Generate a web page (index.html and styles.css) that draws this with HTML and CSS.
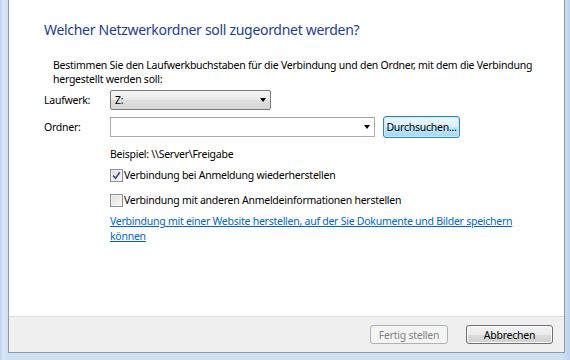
FILE: index.html
```html
<!DOCTYPE html>
<html lang="de">
<head>
<meta charset="utf-8">
<title>Netzlaufwerk verbinden</title>
<link rel="stylesheet" href="styles.css">
</head>
<body>
<div class="frame">
  <div class="window">
    <div class="content">
      <h1 class="title">Welcher Netzwerkordner soll zugeordnet werden?</h1>
      <p class="intro">Bestimmen Sie den Laufwerkbuchstaben für die Verbindung und den Ordner, mit dem die Verbindung hergestellt werden soll:</p>
      <div class="form">
        <div class="row row-drive">
          <span class="label">Laufwerk:</span>
          <div class="dropdown">
            <span class="value">Z:</span>
            <span class="arrow"></span>
          </div>
        </div>
        <div class="row row-folder">
          <span class="label">Ordner:</span>
          <div class="combo">
            <span class="arrow"></span>
          </div>
          <button class="btn btn-focus">Durchsuchen...</button>
        </div>
        <div class="indent">
          <div class="example">Beispiel: \\Server\Freigabe</div>
          <label class="check">
            <span class="box checked">
              <svg width="9" height="9" viewBox="0 0 9 9"><path d="M1.2 4.6 L3.6 7.2 L7.8 1.2" fill="none" stroke="#3a4f7a" stroke-width="1.6"/></svg>
            </span>
            <span>Verbindung bei Anmeldung wiederherstellen</span>
          </label>
          <label class="check">
            <span class="box"></span>
            <span>Verbindung mit anderen Anmeldeinformationen herstellen</span>
          </label>
          <a class="link" href="#">Verbindung mit einer Website herstellen, auf der Sie Dokumente und Bilder speichern können</a>
        </div>
      </div>
    </div>
    <div class="footer">
      <button class="btn btn-disabled" disabled>Fertig stellen</button>
      <button class="btn btn-default">Abbrechen</button>
    </div>
  </div>
</div>
</body>
</html>
```

FILE: styles.css
```css
html, body {
  margin: 0;
  padding: 0;
}
body {
  width: 570px;
  height: 360px;
  overflow: hidden;
  font-family: "Noto Sans", "Liberation Sans", sans-serif;
  font-size: 10.5px;
  letter-spacing: -0.25px;
  color: #000;
}
.frame {
  height: 360px;
  box-sizing: border-box;
  padding: 0 5px 7px 8px;
  background: linear-gradient(to right, #bcd3ee 0px, #d9e7f6 3px, #cfe0f3 8px, #cfe0f3 562px, #bdd4ee 570px);
}
.window {
  height: 353px;
  box-sizing: border-box;
  border-left: 1px solid #8d9aa9;
  border-right: 1px solid #8d9aa9;
  border-bottom: 1px solid #8d9aa9;
  background: #fff;
  display: flex;
  flex-direction: column;
}
.content {
  flex: 1;
  padding: 20px 0 0 35px;
}
.title {
  margin: 0;
  font-weight: normal;
  font-size: 14px;
  letter-spacing: -0.3px;
  line-height: 20px;
  color: #1d3d95;
}
.intro {
  margin: 18px 30px 0 9px;
  line-height: 14px;
}
.form {
  margin-top: 4px;
}
.row {
  display: flex;
  align-items: center;
}
.label {
  width: 66px;
  flex: none;
}
.row-drive {
  height: 20px;
}
.row-folder {
  margin-top: 6px;
  height: 22px;
}
.dropdown {
  width: 161px;
  height: 20px;
  box-sizing: border-box;
  border: 1px solid #7a7a7a;
  border-radius: 2px;
  background: linear-gradient(#f6f6f6, #e9e9e9 50%, #dedede 51%, #d8d8d8);
  display: flex;
  align-items: center;
  padding: 0 4px;
}
.dropdown .value {
  flex: 1;
}
.arrow {
  width: 0;
  height: 0;
  border-left: 3.5px solid transparent;
  border-right: 3.5px solid transparent;
  border-top: 4px solid #000;
}
.combo {
  width: 265px;
  height: 20px;
  box-sizing: border-box;
  border: 1px solid #abadb3;
  border-top-color: #a1a3a9;
  background: #fff;
  display: flex;
  align-items: center;
  justify-content: flex-end;
  padding-right: 4px;
}
.btn {
  font-family: inherit;
  font-size: 10.5px;
  letter-spacing: -0.25px;
  color: #000;
  padding: 0;
  border-radius: 3px;
  box-sizing: border-box;
}
.btn-focus {
  margin-left: 8px;
  width: 77px;
  height: 22px;
  border: 1px solid #3c7fb1;
  background: linear-gradient(#eaf6fd, #d9f0fc 50%, #bee6fd 51%, #a7d9f5);
  box-shadow: inset 0 0 0 1px #c8ebfc;
}
.indent {
  margin-left: 66px;
}
.example {
  margin-top: 9px;
  line-height: 14px;
}
.check {
  display: flex;
  align-items: center;
  gap: 1px;
  margin-top: 7px;
  line-height: 14px;
}
.check + .check {
  margin-top: 11px;
}
.box {
  width: 13px;
  height: 13px;
  box-sizing: border-box;
  border: 1px solid #8e8f8f;
  background: linear-gradient(135deg, #dcdcdc, #fbfbfb);
  box-shadow: inset 0 0 0 1px #f4f4f4;
  display: flex;
  align-items: center;
  justify-content: center;
}
.link {
  display: block;
  margin-top: 7px;
  margin-right: 30px;
  color: #0066cc;
  line-height: 15px;
}
.footer {
  height: 36px;
  flex: none;
  background: #f0f0f0;
  border-top: 1px solid #dfdfdf;
  box-sizing: border-box;
  display: flex;
  align-items: center;
  justify-content: flex-end;
  padding: 0 11px 0 0;
  gap: 18px;
}
.btn-disabled {
  width: 78px;
  height: 19px;
  border: 1px solid #adb2b5;
  background: #f4f4f4;
  color: #838383;
}
.btn-default {
  width: 87px;
  height: 19px;
  border: 1px solid #707070;
  background: linear-gradient(#f2f2f2, #ebebeb 50%, #dddddd 51%, #cfcfcf);
  box-shadow: inset 0 0 0 1px #fcfcfc;
}
```
